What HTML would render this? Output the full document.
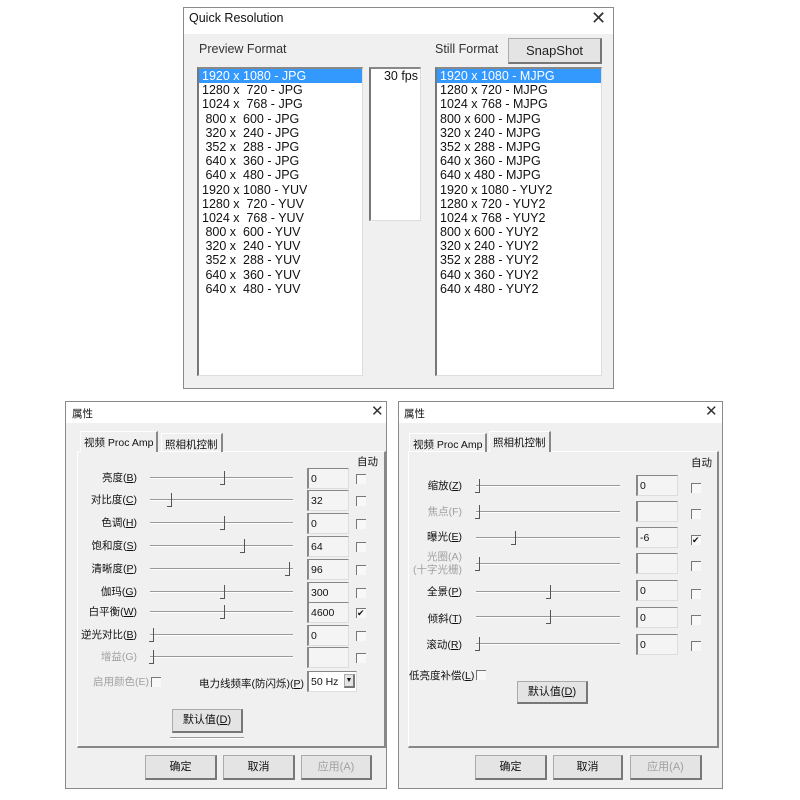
<!DOCTYPE html>
<html><head><meta charset="utf-8"><style>
*{margin:0;padding:0;box-sizing:border-box}
body{width:800px;height:800px;background:#fff;position:relative;overflow:hidden;font-family:"Liberation Sans","Noto Sans CJK SC",sans-serif;color:#111}
.a{position:absolute;white-space:nowrap}
.dlg{position:absolute;background:#f0f0f0;border:1px solid #8a8a8a}
.tb{position:absolute;left:0;right:0;top:0;background:#fff}
.x{position:absolute;font-size:18px;color:#333;font-weight:normal}
.list{position:absolute;background:#fff;border-left:2px solid #777;border-top:2px solid #888;border-right:1px solid #ddd;border-bottom:1px solid #ddd}
.li{font-size:12.5px;height:14.2px;line-height:14.2px;padding-left:3px;white-space:pre}
.sel{background:#3399ff;color:#fff}
.btn{position:absolute;background:#e4e4e4;border:1px solid #aaa;border-right:2px solid #777;border-bottom:2px solid #777;text-align:center;font-size:11px;white-space:nowrap}
.lab{position:absolute;font-size:10.5px;text-align:right;white-space:nowrap}
.dis{color:#a0a0a0}
.sl{position:absolute;height:2px;background:#999;border-bottom:1px solid #fff}
.th{position:absolute;width:5px;height:14px;border-right:1px solid #555;border-bottom:1px solid #555}
.ed{position:absolute;width:42px;height:21px;background:#f4f4f4;border-left:2px solid #888;border-top:1px solid #888;border-right:1px solid #ddd;border-bottom:1px solid #ddd;font-size:10.5px;padding:4px 2px;}
.cb{position:absolute;width:10px;height:10px;border-left:1px solid #777;border-top:1px solid #777;background:#f8f8f8;font-size:9px;line-height:9px}
.panel{position:absolute;border:1px solid #fff;border-right:2px solid #888;border-bottom:2px solid #888}
.tab{position:absolute;font-size:10.5px;border-right:2px solid #888;border-top:1px solid #fff;border-left:1px solid #fff;padding:3px 3px;white-space:nowrap}
</style></head><body>

<div class="dlg" style="left:183px;top:7px;width:431px;height:382px">
<div class="tb" style="height:26px"></div>
<div class="a" style="left:5px;top:3px;font-size:12.5px">Quick Resolution</div>
<div class="x" style="left:407px;top:0px">✕</div>
<div class="a" style="left:15px;top:34px;font-size:12.5px;color:#333">Preview Format</div>
<div class="a" style="left:251px;top:34px;font-size:12.5px;color:#333">Still Format</div>
<div class="btn" style="left:324px;top:30px;width:94px;height:26px;font-size:13px;line-height:23px;color:#222">SnapShot</div>
<div class="list" style="left:13px;top:59px;width:166px;height:309px">
<div class="li sel">1920 x 1080 - JPG</div><div class="li">1280 x  720 - JPG</div><div class="li">1024 x  768 - JPG</div><div class="li"> 800 x  600 - JPG</div><div class="li"> 320 x  240 - JPG</div><div class="li"> 352 x  288 - JPG</div><div class="li"> 640 x  360 - JPG</div><div class="li"> 640 x  480 - JPG</div><div class="li">1920 x 1080 - YUV</div><div class="li">1280 x  720 - YUV</div><div class="li">1024 x  768 - YUV</div><div class="li"> 800 x  600 - YUV</div><div class="li"> 320 x  240 - YUV</div><div class="li"> 352 x  288 - YUV</div><div class="li"> 640 x  360 - YUV</div><div class="li"> 640 x  480 - YUV</div>
</div>
<div class="list" style="left:185px;top:59px;width:52px;height:154px"><div class="li" style="text-align:right;padding-right:2px">30 fps</div></div>
<div class="list" style="left:251px;top:59px;width:167px;height:309px">
<div class="li sel">1920 x 1080 - MJPG</div><div class="li">1280 x 720 - MJPG</div><div class="li">1024 x 768 - MJPG</div><div class="li">800 x 600 - MJPG</div><div class="li">320 x 240 - MJPG</div><div class="li">352 x 288 - MJPG</div><div class="li">640 x 360 - MJPG</div><div class="li">640 x 480 - MJPG</div><div class="li">1920 x 1080 - YUY2</div><div class="li">1280 x 720 - YUY2</div><div class="li">1024 x 768 - YUY2</div><div class="li">800 x 600 - YUY2</div><div class="li">320 x 240 - YUY2</div><div class="li">352 x 288 - YUY2</div><div class="li">640 x 360 - YUY2</div><div class="li">640 x 480 - YUY2</div>
</div>
</div>

<div class="dlg" style="left:65px;top:401px;width:322px;height:388px">
<div class="tb" style="height:21px"></div>
<div class="a" style="left:6px;top:4px;font-size:10.5px">属性</div>
<div class="x" style="left:305px;top:0px;font-size:15px">✕</div>
<div class="panel" style="left:11px;top:49px;width:309px;height:297px"></div>
<div class="tab" style="left:14px;top:29px;height:21px;background:#f0f0f0">视频 Proc Amp</div>
<div class="tab" style="left:95px;top:31px;height:19px">照相机控制</div>
<div class="a" style="left:291px;top:52px;font-size:10.5px">自动</div>
</div>

<div class="dlg" style="left:398px;top:401px;width:325px;height:388px">
<div class="tb" style="height:21px"></div>
<div class="a" style="left:5px;top:4px;font-size:10.5px">属性</div>
<div class="x" style="left:306px;top:0px;font-size:15px">✕</div>
<div class="panel" style="left:9px;top:49px;width:311px;height:297px"></div>
<div class="tab" style="left:10px;top:31px;height:19px">视频 Proc Amp</div>
<div class="tab" style="left:90px;top:29px;height:21px;background:#f0f0f0">照相机控制</div>
<div class="a" style="left:292px;top:53px;font-size:10.5px">自动</div>
</div>

<div class="lab" style="left:70px;width:67px;top:470px">亮度(<u>B</u>)</div>
<div class="sl" style="left:150px;top:477px;width:143px"></div><div class="th" style="left:220px;top:471px"></div>
<div class="ed" style="left:307px;top:468px">0</div><div class="cb" style="left:356px;top:474px"></div>

<div class="lab" style="left:70px;width:67px;top:492px">对比度(<u>C</u>)</div>
<div class="sl" style="left:150px;top:499px;width:143px"></div><div class="th" style="left:167px;top:493px"></div>
<div class="ed" style="left:307px;top:490px">32</div><div class="cb" style="left:356px;top:496px"></div>

<div class="lab" style="left:70px;width:67px;top:515px">色调(<u>H</u>)</div>
<div class="sl" style="left:150px;top:522px;width:143px"></div><div class="th" style="left:220px;top:516px"></div>
<div class="ed" style="left:307px;top:513px">0</div><div class="cb" style="left:356px;top:519px"></div>

<div class="lab" style="left:70px;width:67px;top:538px">饱和度(<u>S</u>)</div>
<div class="sl" style="left:150px;top:545px;width:143px"></div><div class="th" style="left:240px;top:539px"></div>
<div class="ed" style="left:307px;top:536px">64</div><div class="cb" style="left:356px;top:542px"></div>

<div class="lab" style="left:70px;width:67px;top:561px">清晰度(<u>P</u>)</div>
<div class="sl" style="left:150px;top:568px;width:143px"></div><div class="th" style="left:285px;top:562px"></div>
<div class="ed" style="left:307px;top:559px">96</div><div class="cb" style="left:356px;top:565px"></div>

<div class="lab" style="left:70px;width:67px;top:584px">伽玛(<u>G</u>)</div>
<div class="sl" style="left:150px;top:591px;width:143px"></div><div class="th" style="left:220px;top:585px"></div>
<div class="ed" style="left:307px;top:582px">300</div><div class="cb" style="left:356px;top:588px"></div>

<div class="lab" style="left:70px;width:67px;top:604px">白平衡(<u>W</u>)</div>
<div class="sl" style="left:150px;top:611px;width:143px"></div><div class="th" style="left:220px;top:605px"></div>
<div class="ed" style="left:307px;top:602px">4600</div><div class="cb" style="left:356px;top:608px">✔</div>

<div class="lab" style="left:70px;width:67px;top:627px">逆光对比(<u>B</u>)</div>
<div class="sl" style="left:150px;top:634px;width:143px"></div><div class="th" style="left:149px;top:628px"></div>
<div class="ed" style="left:307px;top:625px">0</div><div class="cb" style="left:356px;top:631px"></div>

<div class="lab dis" style="left:70px;width:67px;top:649px">增益(G)</div>
<div class="sl" style="left:150px;top:656px;width:143px"></div><div class="th" style="left:149px;top:650px"></div>
<div class="ed" style="left:307px;top:647px"></div><div class="cb" style="left:356px;top:653px"></div>

<div class="lab dis" style="left:93px;top:674px;text-align:left">启用颜色(E)</div><div class="cb" style="left:151px;top:677px"></div>
<div class="lab" style="left:199px;top:676px">电力线频率(防闪烁)(<u>P</u>)</div>
<div class="ed" style="left:307px;top:671px;width:50px;background:#fff">50 Hz</div>
<div class="btn" style="left:344px;top:674px;width:11px;height:14px;font-size:7px;line-height:12px">▼</div>
<div class="btn" style="left:172px;top:709px;width:71px;height:24px;line-height:21px">默认值(<u>D</u>)</div>
<div class="sl" style="left:170px;top:737px;width:74px"></div>
<div class="btn" style="left:145px;top:755px;width:72px;height:25px;line-height:22px">确定</div>
<div class="btn" style="left:223px;top:755px;width:72px;height:25px;line-height:22px">取消</div>
<div class="btn dis" style="left:301px;top:755px;width:71px;height:25px;line-height:22px">应用(A)</div>

<div class="lab" style="left:400px;width:62px;top:478px">缩放(<u>Z</u>)</div>
<div class="sl" style="left:476px;top:485px;width:144px"></div><div class="th" style="left:475px;top:479px"></div>
<div class="ed" style="left:636px;top:475px">0</div><div class="cb" style="left:691px;top:483px"></div>

<div class="lab dis" style="left:400px;width:62px;top:504px">焦点(F)</div>
<div class="sl" style="left:476px;top:511px;width:144px"></div><div class="th" style="left:475px;top:505px"></div>
<div class="ed" style="left:636px;top:501px"></div><div class="cb" style="left:691px;top:509px"></div>

<div class="lab" style="left:400px;width:62px;top:529px">曝光(<u>E</u>)</div>
<div class="sl" style="left:476px;top:537px;width:144px"></div><div class="th" style="left:511px;top:531px"></div>
<div class="ed" style="left:636px;top:527px">-6</div><div class="cb" style="left:691px;top:535px">✔</div>

<div class="lab dis" style="left:400px;width:62px;top:551px;line-height:13px">光圈(A)<br>(十字光栅)</div>
<div class="sl" style="left:476px;top:563px;width:144px"></div><div class="th" style="left:475px;top:557px"></div>
<div class="ed" style="left:636px;top:553px"></div><div class="cb" style="left:691px;top:561px"></div>

<div class="lab" style="left:400px;width:62px;top:584px">全景(<u>P</u>)</div>
<div class="sl" style="left:476px;top:591px;width:144px"></div><div class="th" style="left:546px;top:585px"></div>
<div class="ed" style="left:636px;top:580px">0</div><div class="cb" style="left:691px;top:589px"></div>

<div class="lab" style="left:400px;width:62px;top:611px">倾斜(<u>T</u>)</div>
<div class="sl" style="left:476px;top:616px;width:144px"></div><div class="th" style="left:546px;top:610px"></div>
<div class="ed" style="left:636px;top:607px">0</div><div class="cb" style="left:691px;top:615px"></div>

<div class="lab" style="left:400px;width:62px;top:637px">滚动(<u>R</u>)</div>
<div class="sl" style="left:476px;top:643px;width:144px"></div><div class="th" style="left:475px;top:637px"></div>
<div class="ed" style="left:636px;top:634px">0</div><div class="cb" style="left:691px;top:641px"></div>

<div class="lab" style="left:409px;top:668px">低亮度补偿(<u>L</u>)</div><div class="cb" style="left:476px;top:670px"></div>
<div class="btn" style="left:517px;top:681px;width:71px;height:23px;line-height:20px">默认值(<u>D</u>)</div>
<div class="btn" style="left:475px;top:755px;width:72px;height:25px;line-height:22px">确定</div>
<div class="btn" style="left:553px;top:755px;width:70px;height:25px;line-height:22px">取消</div>
<div class="btn dis" style="left:630px;top:755px;width:72px;height:25px;line-height:22px">应用(A)</div>
</body></html>
